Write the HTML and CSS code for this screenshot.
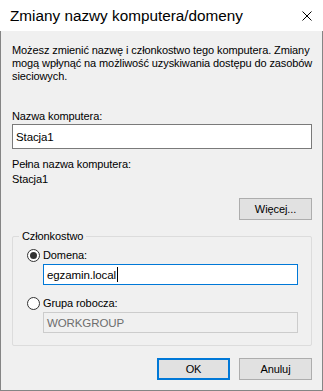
FILE: index.html
```html
<!DOCTYPE html>
<html lang="pl">
<head>
    <meta charset="UTF-8">
    <title>Zmiany nazwy komputera/domeny</title>
    <link rel="stylesheet" href="styles.css">
</head>
<body>
    <div class="dialog">
        <div class="titlebar">
            <span class="title">Zmiany nazwy komputera/domeny</span>
            <svg class="close" width="10" height="10" viewBox="0 0 10 10">
                <path d="M0.5 0.5 L9.5 9.5 M9.5 0.5 L0.5 9.5" stroke="#000" stroke-width="1" fill="none"/>
            </svg>
        </div>
        <div class="content">
            <p class="intro">Możesz zmienić nazwę i członkostwo tego komputera. Zmiany<br>mogą wpłynąć na możliwość uzyskiwania dostępu do zasobów<br>sieciowych.</p>

            <div class="label name-label">Nazwa komputera:</div>
            <div class="textbox name-box">Stacja1</div>

            <div class="label full-label">Pełna nazwa komputera:</div>
            <div class="label full-value">Stacja1</div>

            <div class="more-row">
                <div class="button">Więcej...</div>
            </div>

            <div class="group">
                <span class="legend">Członkostwo</span>
                <div class="radio-row domain-row">
                    <span class="radio checked"></span>
                    <span>Domena:</span>
                </div>
                <div class="textbox small focused">egzamin.local<span class="caret"></span></div>
                <div class="radio-row workgroup-row">
                    <span class="radio"></span>
                    <span>Grupa robocza:</span>
                </div>
                <div class="textbox small disabled">WORKGROUP</div>
            </div>

            <div class="actions">
                <div class="button default">OK</div>
                <div class="button">Anuluj</div>
            </div>
        </div>
    </div>
</body>
</html>
```

FILE: styles.css
```css
/* Reset */
body, p {
    margin: 0;
    padding: 0;
}

body {
    width: 323px;
    height: 391px;
    font-family: "Segoe UI", "Liberation Sans", Arial, sans-serif;
    font-size: 11px;
    letter-spacing: -0.1px;
    color: #000;
    background: #f0f0f0;
}

.dialog {
    width: 323px;
    height: 391px;
    box-sizing: border-box;
    display: flex;
    flex-direction: column;
}

/* Title bar */
.titlebar {
    height: 31px;
    flex: none;
    background: #fff;
    display: flex;
    align-items: center;
    justify-content: space-between;
    padding: 0 11px 0 10px;
}

.title {
    font-size: 15.3px;
    letter-spacing: 0;
}

.close {
    display: block;
}

/* Main area */
.content {
    flex: 1;
    background: #f0f0f0;
    border: 1px solid #858585;
    border-top: none;
    padding: 13px 10px 0 11px;
    display: flex;
    flex-direction: column;
}

.intro {
    line-height: 13px;
    white-space: nowrap;
}

.label {
    line-height: 14px;
}

.name-label {
    margin-top: 26px;
}

.textbox {
    box-sizing: border-box;
    height: 25px;
    border: 1px solid #7a7a7a;
    background: #fff;
    padding: 0 3px;
    display: flex;
    align-items: center;
    font-size: 11.5px;
}

.name-box {
    margin-top: 1px;
}

.full-label {
    margin-top: 8px;
}

.full-value {
    margin-top: 1px;
}

.more-row {
    display: flex;
    justify-content: flex-end;
    margin-top: 12px;
}

.button {
    box-sizing: border-box;
    width: 73px;
    height: 22px;
    border: 1px solid #adadad;
    background: #e1e1e1;
    display: flex;
    align-items: center;
    justify-content: center;
}

.button.default {
    border: 2px solid #0078d7;
}

/* Membership group */
.group {
    position: relative;
    margin-top: 16px;
    height: 110px;
    box-sizing: border-box;
    border: 1px solid #dcdcdc;
    border-radius: 2px;
    padding: 11px 13px 0 14px;
}

.legend {
    position: absolute;
    top: -8px;
    left: 6px;
    padding: 0 3px;
    background: #f0f0f0;
    line-height: 14px;
}

.radio-row {
    display: flex;
    align-items: center;
    gap: 3px;
    line-height: 14px;
}

.radio {
    box-sizing: border-box;
    width: 13px;
    height: 13px;
    border: 1px solid #333;
    border-radius: 50%;
    background: #fff;
    display: flex;
    align-items: center;
    justify-content: center;
}

.radio.checked::after {
    content: '';
    width: 7px;
    height: 7px;
    border-radius: 50%;
    background: #333;
}

.textbox.small {
    height: 21px;
    margin: 2px 0 0 16px;
}

.textbox.focused {
    border-color: #0078d7;
}

.caret {
    display: inline-block;
    width: 1px;
    height: 15px;
    background: #000;
    margin-left: 1px;
}

.textbox.disabled {
    border-color: #ccc;
    background: #f0f0f0;
    color: #6d6d6d;
}

.workgroup-row {
    margin-top: 11px;
}

.actions {
    display: flex;
    justify-content: flex-end;
    gap: 9px;
    margin-top: 12px;
}
```
